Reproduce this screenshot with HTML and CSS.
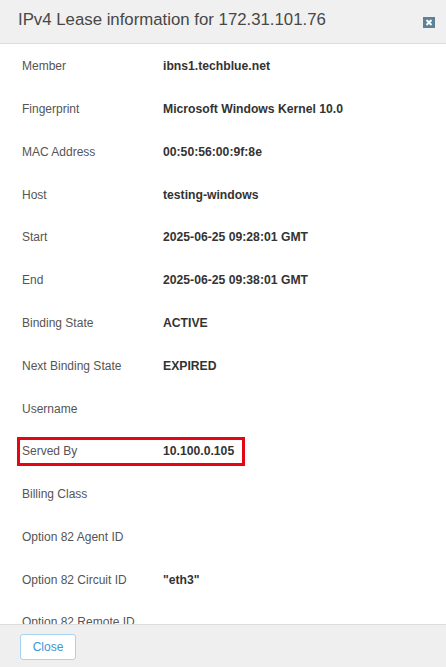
FILE: index.html
```html
<!DOCTYPE html>
<html lang="en">
<head>
    <meta charset="UTF-8">
    <meta name="viewport" content="width=device-width, initial-scale=1.0">
    <title>IPv4 Lease information</title>
    <link rel="stylesheet" href="styles.css">
</head>
<body>

<div class="modal">
    <div class="modal-header">
        <h1 class="modal-title">IPv4 Lease information for 172.31.101.76</h1>
        <span class="close-icon" aria-label="Close">
            <svg width="12" height="11" viewBox="0 0 12 11">
                <rect width="12" height="11" fill="#5d8196"/>
                <path d="M3.5 3 L8.5 8 M8.5 3 L3.5 8" stroke="#ffffff" stroke-width="2"/>
            </svg>
        </span>
    </div>

    <div class="modal-body">
        <div class="row"><span class="label">Member</span><span class="value">ibns1.techblue.net</span></div>
        <div class="row"><span class="label">Fingerprint</span><span class="value">Microsoft Windows Kernel 10.0</span></div>
        <div class="row"><span class="label">MAC Address</span><span class="value">00:50:56:00:9f:8e</span></div>
        <div class="row"><span class="label">Host</span><span class="value">testing-windows</span></div>
        <div class="row"><span class="label">Start</span><span class="value">2025-06-25 09:28:01 GMT</span></div>
        <div class="row"><span class="label">End</span><span class="value">2025-06-25 09:38:01 GMT</span></div>
        <div class="row"><span class="label">Binding State</span><span class="value">ACTIVE</span></div>
        <div class="row"><span class="label">Next Binding State</span><span class="value">EXPIRED</span></div>
        <div class="row"><span class="label">Username</span><span class="value"></span></div>
        <div class="row">
            <div class="highlight"><span class="label">Served By</span><span class="value">10.100.0.105</span></div>
        </div>
        <div class="row"><span class="label">Billing Class</span><span class="value"></span></div>
        <div class="row"><span class="label">Option 82 Agent ID</span><span class="value"></span></div>
        <div class="row"><span class="label">Option 82 Circuit ID</span><span class="value">"eth3"</span></div>
        <div class="row"><span class="label">Option 82 Remote ID</span><span class="value"></span></div>
    </div>

    <div class="modal-footer">
        <button class="btn-close" type="button">Close</button>
    </div>
</div>

</body>
</html>
```

FILE: styles.css
```css
body {
    margin: 0;
    padding: 0;
    font-family: "Liberation Sans", Arial, sans-serif;
    background: #ffffff;
}

.modal {
    display: flex;
    flex-direction: column;
    height: 667px;
    overflow: hidden;
}

.modal-header {
    flex: 0 0 auto;
    height: 43px;
    background: #f0f0f0;
    border-bottom: 1px solid #dcdcdc;
    display: flex;
    align-items: center;
    justify-content: space-between;
    padding: 0 11px 0 18px;
}

.modal-title {
    margin: 0;
    font-size: 16.8px;
    font-weight: normal;
    color: #474747;
    padding-bottom: 3px;
}

.close-icon {
    display: flex;
    margin-top: 1px;
}

.modal-body {
    flex: 1 1 auto;
    overflow: hidden;
    padding-top: 1px;
}

.row {
    height: 42.77px;
    display: flex;
    align-items: center;
    padding-left: 22px;
    font-size: 12px;
}

.label {
    width: 141px;
    flex: 0 0 141px;
    color: #555555;
}

.value {
    font-weight: bold;
    font-size: 12.2px;
    color: #333333;
}

.highlight {
    display: flex;
    align-items: center;
    height: 23px;
    margin-left: -5px;
    padding: 0 8px 0 2px;
    border: 3px solid #e30613;
}

.modal-footer {
    flex: 0 0 auto;
    height: 42px;
    background: #efefef;
    border-top: 1px solid #dcdcdc;
    display: flex;
    align-items: center;
    padding-left: 20px;
}

.btn-close {
    width: 56px;
    height: 26px;
    margin-top: 2px;
    background: #ffffff;
    border: 1px solid #a6d2f3;
    border-radius: 3px;
    color: #3b96d2;
    font-family: "Liberation Sans", Arial, sans-serif;
    font-size: 12px;
    padding: 0;
}
```
